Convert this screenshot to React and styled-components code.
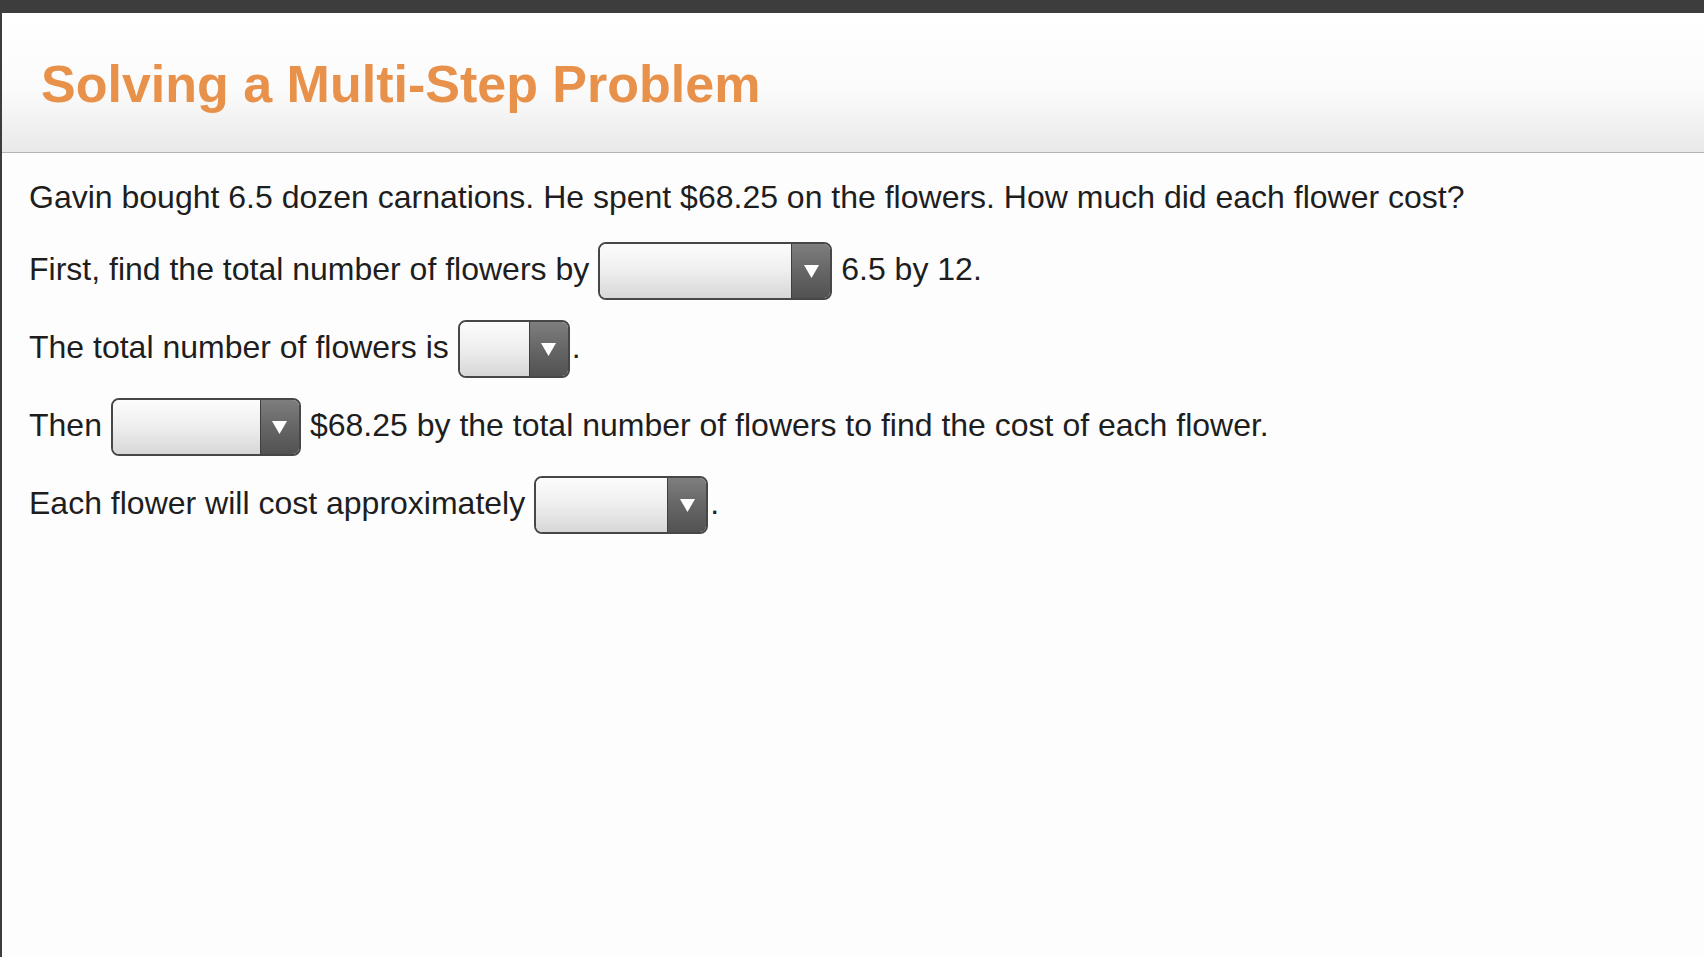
import React from "react";
import styled, { createGlobalStyle } from "styled-components";

const GlobalStyle = createGlobalStyle`
  html, body {
    margin: 0;
    padding: 0;
    background: #3d3d3d;
  }
  body {
    font-family: "Liberation Sans", Arial, Helvetica, sans-serif;
  }
`;

const Page = styled.div`
  height: 100vh;
  box-sizing: border-box;
  border-top: 13px solid #3d3d3d;
  border-left: 2px solid #3d3d3d;
  background: #fdfdfd;
  display: flex;
  flex-direction: column;
`;

const Header = styled.header`
  height: 140px;
  box-sizing: border-box;
  padding: 45px 0 0 39px;
  background: linear-gradient(to bottom, #ffffff 0%, #fbfbfb 55%, #e9e9e9 100%);
  border-bottom: 1px solid #b3b3b3;
`;

const Title = styled.h1`
  margin: 0;
  font-size: 52px;
  line-height: 52px;
  font-weight: bold;
  color: #e8914a;
`;

const Content = styled.main`
  padding: 21px 0 0 27px;
  display: flex;
  flex-direction: column;
  gap: 20px;
`;

const Row = styled.div`
  display: flex;
  align-items: center;
  height: ${(p) => (p.$short ? 46 : 58)}px;
  font-size: 32px;
  color: #1e1e1e;
  white-space: pre;
`;

const Select = styled.div`
  box-sizing: border-box;
  width: ${(p) => p.$width}px;
  height: 58px;
  margin: 4px ${(p) => (p.$tight ? 2 : 9)}px 0 9px;
  border: 2.5px solid #474747;
  border-radius: 8px;
  overflow: hidden;
  display: flex;
  flex-shrink: 0;
`;

const Field = styled.div`
  flex: 1;
  background: linear-gradient(to bottom, #fcfcfc 0%, #eeeeee 50%, #d7d7d7 100%);
`;

const ArrowBox = styled.div`
  width: 38px;
  border-left: 1px solid #3f3f3f;
  background: linear-gradient(to bottom, #7e7e7e 0%, #666666 50%, #525252 100%);
  display: flex;
  align-items: center;
  justify-content: center;
`;

const Dropdown = ({ width, tight }) => (
  <Select $width={width} $tight={tight}>
    <Field />
    <ArrowBox>
      <svg width="15" height="13" viewBox="0 0 15 13">
        <polygon points="0,0 15,0 7.5,13" fill="#ffffff" />
      </svg>
    </ArrowBox>
  </Select>
);

export default function App() {
  return (
    <>
      <GlobalStyle />
      <Page>
        <Header>
          <Title>Solving a Multi-Step Problem</Title>
        </Header>
        <Content>
          <Row $short>
            Gavin bought 6.5 dozen carnations. He spent $68.25 on the flowers. How much did each flower cost?
          </Row>
          <Row>
            <span>First, find the total number of flowers by</span>
            <Dropdown width={234} />
            <span>6.5 by 12.</span>
          </Row>
          <Row>
            <span>The total number of flowers is</span>
            <Dropdown width={112} tight />
            <span>.</span>
          </Row>
          <Row>
            <span>Then</span>
            <Dropdown width={190} />
            <span>$68.25 by the total number of flowers to find the cost of each flower.</span>
          </Row>
          <Row>
            <span>Each flower will cost approximately</span>
            <Dropdown width={174} tight />
            <span>.</span>
          </Row>
        </Content>
      </Page>
    </>
  );
}
